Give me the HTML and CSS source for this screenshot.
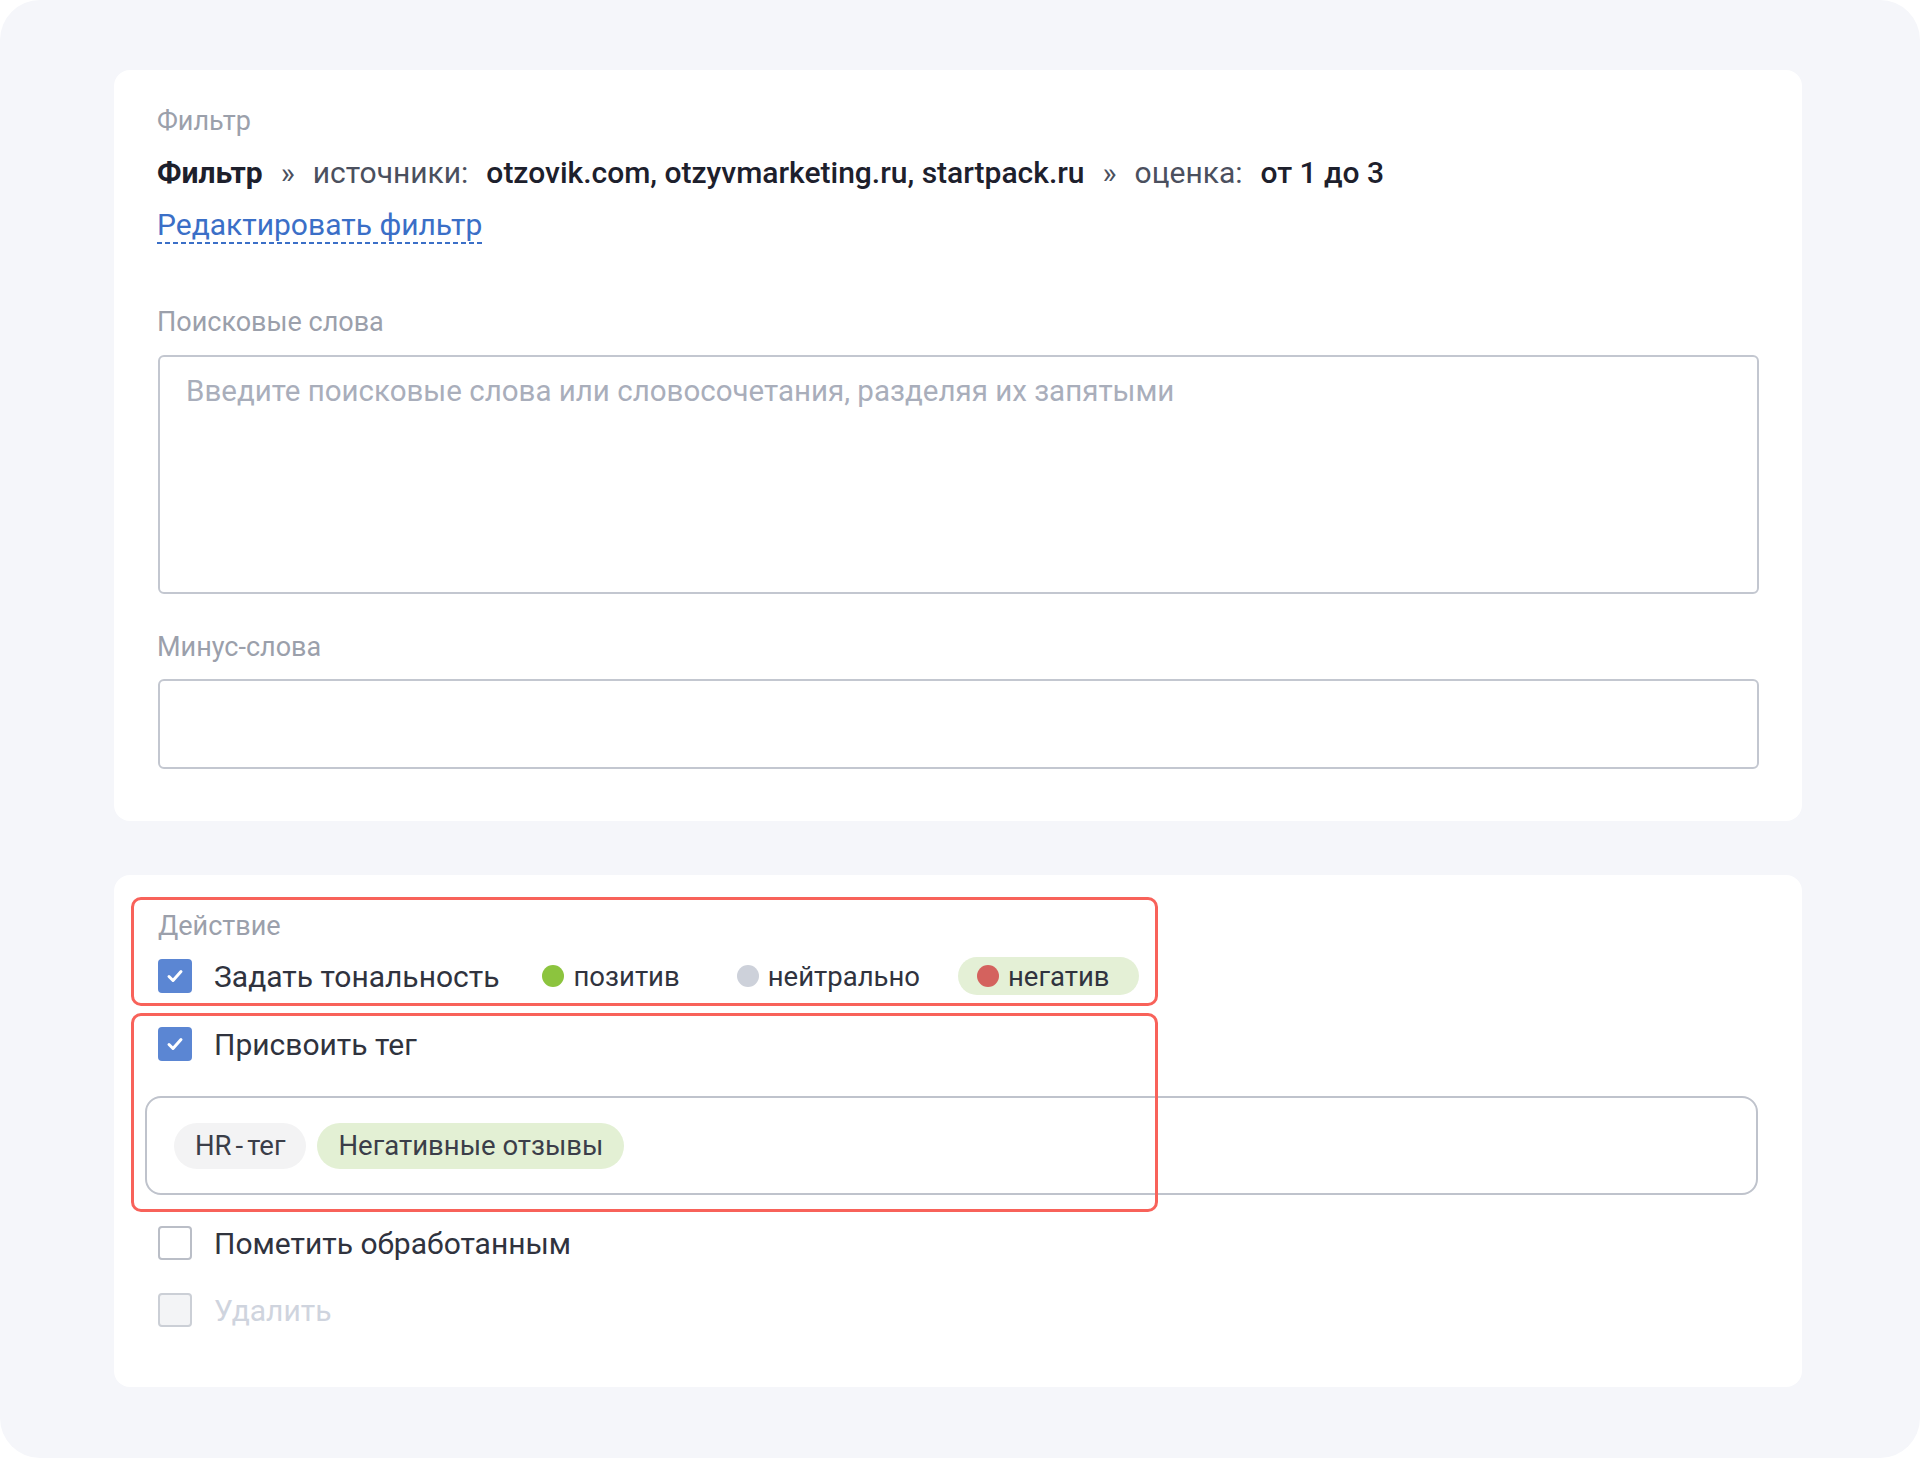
FILE: index.html
```html
<!DOCTYPE html>
<html lang="ru">
<head>
<meta charset="utf-8">
<title>Фильтр</title>
<link rel="stylesheet" href="styles.css">
</head>
<body>
<div class="page">
  <section class="card card-filter">
    <div class="label">Фильтр</div>
    <div class="crumbs">
      <span class="title">Фильтр</span>
      <span class="sep">»</span>
      <span class="key">источники:</span>
      <span class="val">otzovik.com, otzyvmarketing.ru, startpack.ru</span>
      <span class="sep">»</span>
      <span class="key">оценка:</span>
      <span class="val">от 1 до 3</span>
    </div>
    <a class="edit-link" href="#">Редактировать фильтр</a>

    <div class="field field-search">
      <div class="label">Поисковые слова</div>
      <div class="textarea"><span class="placeholder">Введите поисковые слова или словосочетания, разделяя их запятыми</span></div>
    </div>

    <div class="field field-minus">
      <div class="label">Минус-слова</div>
      <div class="input"></div>
    </div>
  </section>

  <section class="card card-action">
    <div class="label">Действие</div>

    <div class="row row-tone">
      <span class="check checked"><svg viewBox="0 0 34 34" width="34" height="34"><path d="M11 17.5l4 4 8-9" fill="none" stroke="#fff" stroke-width="3" stroke-linecap="round" stroke-linejoin="round"/></svg></span>
      <span class="row-text">Задать тональность</span>
      <div class="tones">
        <span class="tone"><i class="dot dot-pos"></i>позитив</span>
        <span class="tone"><i class="dot dot-neu"></i>нейтрально</span>
        <span class="tone active"><i class="dot dot-neg"></i>негатив</span>
      </div>
    </div>

    <div class="row row-tag">
      <span class="check checked"><svg viewBox="0 0 34 34" width="34" height="34"><path d="M11 17.5l4 4 8-9" fill="none" stroke="#fff" stroke-width="3" stroke-linecap="round" stroke-linejoin="round"/></svg></span>
      <span class="row-text">Присвоить тег</span>
    </div>

    <div class="tag-input">
      <span class="tag tag-gray">HR<span class="hyph">-</span>тег</span>
      <span class="tag tag-green">Негативные отзывы</span>
    </div>

    <div class="row row-done">
      <span class="check"></span>
      <span class="row-text">Пометить обработанным</span>
    </div>

    <div class="row row-delete disabled">
      <span class="check"></span>
      <span class="row-text">Удалить</span>
    </div>

    <div class="highlight highlight-tone"></div>
    <div class="highlight highlight-tag"></div>
  </section>
</div>
</body>
</html>
```

FILE: styles.css
```css
* { box-sizing: border-box; }

html, body {
  margin: 0;
  padding: 0;
  background: #ffffff;
}

body {
  font-family: Roboto, "Noto Sans", "Liberation Sans", sans-serif;
  color: #2d303b;
}

.page {
  width: 1920px;
  height: 1458px;
  background: #f5f6fa;
  border-radius: 40px;
  padding: 70px 118px 0 114px;
  display: flex;
  flex-direction: column;
  gap: 54px;
}

.card {
  background: #ffffff;
  border-radius: 16px;
}

.label {
  font-size: 27px;
  line-height: 30px;
  color: #9ba0ab;
}

/* ---------- filter card ---------- */
.card-filter {
  padding: 36px 43px 52px 43px;
  display: flex;
  flex-direction: column;
  align-items: flex-start;
}

.crumbs {
  margin-top: 19px;
  display: flex;
  align-items: baseline;
  gap: 18px;
  font-size: 30px;
  line-height: 36px;
  color: #1d202c;
  white-space: nowrap;
}

.crumbs .title { font-weight: 700; }
.crumbs .val { font-weight: 500; }
.crumbs .key,
.crumbs .sep { color: #4b505e; font-weight: 400; }

.edit-link {
  margin-top: 18px;
  font-size: 30px;
  line-height: 32px;
  color: #3b6fc7;
  text-decoration: none;
  padding-bottom: 3px;
  background-image: linear-gradient(to right, #3b6fc7 60%, transparent 60%);
  background-size: 8px 2px;
  background-repeat: repeat-x;
  background-position: left bottom;
}

.field {
  align-self: stretch;
  display: flex;
  flex-direction: column;
  gap: 18px;
}

.field-search { margin-top: 63px; }
.field-minus { margin-top: 38px; gap: 17px; }

.textarea,
.input {
  border: 2px solid #c3c7d0;
  border-radius: 6px;
  margin-left: 1px;
}

.textarea {
  height: 239px;
  padding: 18px 26px;
}

.placeholder {
  font-size: 29.5px;
  line-height: 32px;
  color: #a9aebb;
}

.input { height: 90px; }

/* ---------- action card ---------- */
.card-action {
  position: relative;
  padding: 36px 44px 60px 44px;
  display: flex;
  flex-direction: column;
}

.row {
  display: flex;
  align-items: center;
  height: 34px;
  font-size: 30px;
  color: #30333e;
}

.row-tone { margin-top: 18px; }
.row-tag { margin-top: 34px; }
.row-done { margin-top: 31px; }
.row-delete { margin-top: 33px; }

.check {
  width: 34px;
  height: 34px;
  flex: 0 0 34px;
  border: 2px solid #babec7;
  border-radius: 4px;
  background: #ffffff;
  margin-right: 22px;
  display: flex;
}

.check.checked {
  border: none;
  background: #5b86d3;
}

.disabled .check {
  background: #f3f4f6;
  border-color: #cbcfd6;
}

.disabled .row-text { color: #cfd4de; }

.tones {
  display: flex;
  align-items: center;
  gap: 9px;
  margin-left: 24px;
}

.tone {
  display: flex;
  align-items: center;
  height: 38px;
  padding: 0 29px 0 19px;
  border-radius: 19px;
  font-size: 27.5px;
  color: #30333e;
}

.tone.active { background: #e4f0d6; }

.dot {
  width: 22px;
  height: 22px;
  border-radius: 50%;
  margin-right: 9px;
  flex: 0 0 22px;
}

.dot-pos { background: #8cc43e; }
.dot-neu { background: #cdd1da; }
.dot-neg { background: #d4625e; }

.tag-input {
  margin-top: 35px;
  margin-left: -13px;
  height: 99px;
  border: 2px solid #bfc3cc;
  border-radius: 16px;
  padding: 0 27px;
  display: flex;
  align-items: center;
  gap: 11px;
}

.tag {
  height: 46px;
  line-height: 46px;
  padding: 0 21px;
  border-radius: 23px;
  font-size: 27.5px;
  color: #3b3e49;
}

.tag .hyph { margin: 0 4px; }

.tag-gray { background: #f3f3f4; }
.tag-green { background: #e3f0d4; }

.highlight {
  position: absolute;
  left: 17px;
  width: 1027px;
  border: 3px solid #f8625a;
  border-radius: 10px;
  pointer-events: none;
}

.highlight-tone { top: 22px; height: 109px; }
.highlight-tag { top: 138px; height: 199px; }
```
